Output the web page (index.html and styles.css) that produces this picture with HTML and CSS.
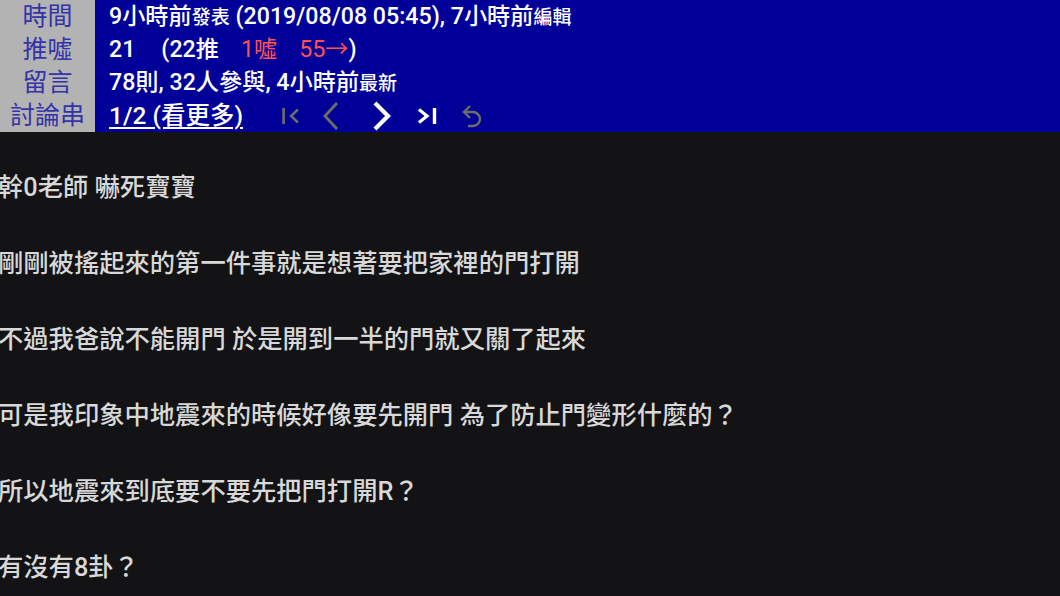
FILE: index.html
```html
<!DOCTYPE html>
<html lang="zh-Hant">
<head>
<meta charset="utf-8">
<link rel="stylesheet" href="styles.css">
</head>
<body>
<div class="meta">
  <div class="label">時間</div>
  <div class="value">9小時前<span class="small">發表</span> (2019/08/08 05:45), 7小時前<span class="small">編輯</span></div>
  <div class="label">推噓</div>
  <div class="value">21<span class="gap1"></span>(22推<span class="gap2"></span><span class="red">1噓<span class="gap2"></span>55→</span>)</div>
  <div class="label">留言</div>
  <div class="value">78則, 32人參與, 4小時前<span class="small">最新</span></div>
  <div class="label">討論串</div>
  <div class="value nav">
    <span class="link">1/2 (看更多)</span>
    <svg class="ico first" width="18" height="18" viewBox="0 0 18 18"><path d="M1.6 1v16" stroke="#6e6e66" stroke-width="2.6"/><path d="M16 2.5L9 9l7 6.5" fill="none" stroke="#6e6e66" stroke-width="2.4"/></svg>
    <svg class="ico prev" width="20" height="30" viewBox="0 0 20 30"><path d="M17 2L5 15l12 13" fill="none" stroke="#6e6e66" stroke-width="2.8"/></svg>
    <svg class="ico next" width="20" height="30" viewBox="0 0 20 30"><path d="M3 2l13 13L3 28" fill="none" stroke="#ffffff" stroke-width="4.2"/></svg>
    <svg class="ico last" width="20" height="18" viewBox="0 0 20 18"><path d="M2 2.5l8 6.5-8 6.5" fill="none" stroke="#ffffff" stroke-width="3.2"/><path d="M17.5 1v16" stroke="#ffffff" stroke-width="3.4"/></svg>
    <svg class="ico undo" width="24" height="28" viewBox="0 0 24 28"><path d="M4 10h9a7 7 0 0 1 0 14H8" fill="none" stroke="#6e6e66" stroke-width="2.4"/><path d="M10 4L4 10l6 6" fill="none" stroke="#6e6e66" stroke-width="2.4"/></svg>
  </div>
</div>
<div class="content">
  <p>幹0老師 嚇死寶寶</p>
  <p>剛剛被搖起來的第一件事就是想著要把家裡的門打開</p>
  <p>不過我爸說不能開門 於是開到一半的門就又關了起來</p>
  <p>可是我印象中地震來的時候好像要先開門 為了防止門變形什麼的？</p>
  <p>所以地震來到底要不要先把門打開R？</p>
  <p>有沒有8卦？</p>
</div>
</body>
</html>
```
FILE: styles.css
```css
html, body {
  margin: 0;
  padding: 0;
  background: #131315;
  overflow: hidden;
}
body {
  font-family: "Roboto", "Noto Sans CJK TC", sans-serif;
}
.meta {
  display: grid;
  grid-template-columns: 95px 1fr;
  grid-auto-rows: 33px;
  background: #000099;
}
.label {
  background: #b3b3b3;
  color: #3434a8;
  font-size: 25px;
  text-align: center;
  line-height: 33px;
}
.value {
  color: #ffffff;
  font-size: 23.2px;
  font-weight: 500;
  line-height: 33px;
  padding-left: 14px;
  white-space: nowrap;
}
.small {
  font-size: 19px;
}
.red {
  color: #ff5050;
  font-weight: 400;
}
.gap1 {
  display: inline-block;
  width: 26px;
}
.gap2 {
  display: inline-block;
  width: 22px;
}
.nav {
  display: flex;
  align-items: center;
}
.link {
  font-size: 24.5px;
  text-decoration: underline;
  text-underline-offset: 3px;
  text-decoration-thickness: 1.5px;
}
.ico {
  display: block;
  flex: none;
}
.first { margin-left: 39px; }
.prev { margin-left: 20px; }
.next { margin-left: 32px; }
.last { margin-left: 25px; }
.undo { margin-left: 23px; }
.content {
  color: #d8d8d8;
  font-size: 25.3px;
  font-weight: 500;
  margin-top: 37px;
  margin-left: -2px;
}
.content p {
  margin: 0 0 38px;
  line-height: 38px;
}
```
